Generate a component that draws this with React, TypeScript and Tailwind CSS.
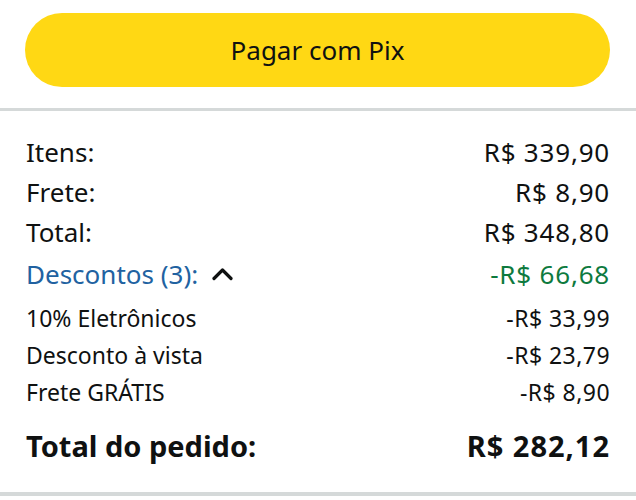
import React from "react";

function Row({ label, value, className, valueClass }: { label: React.ReactNode; value: string; className: string; valueClass?: string }) {
  return (
    <div className={`flex items-center justify-between ${className}`}>
      <div className="flex items-center">{label}</div>
      <div className={valueClass}>{value}</div>
    </div>
  );
}

export default function App() {
  return (
    <div className="w-[636px] h-[500px] bg-white text-[#0f1111] overflow-hidden" style={{ fontFamily: '"Noto Sans", "Open Sans", sans-serif' }}>
      <div className="px-[25px] pt-[13px] pb-[21px]">
        <button className="w-[585px] h-[74px] rounded-full bg-[#FFD814] text-[26px] text-[#0f1111] flex items-center justify-center">
          Pagar com Pix
        </button>
      </div>
      <div className="h-[3px] bg-[#d5d9d9]" />
      <div className="px-[26px] pt-[21px]">
        <Row label="Itens:" value="R$ 339,90" valueClass="tracking-[0.8px]" className="h-[40px] text-[26px]" />
        <Row label="Frete:" value="R$ 8,90" valueClass="tracking-[0.8px]" className="h-[40px] text-[26px]" />
        <Row label="Total:" value="R$ 348,80" valueClass="tracking-[0.8px]" className="h-[40px] text-[26px]" />
        <Row
          label={
            <>
              <span className="text-[#2162a1]">Descontos (3):</span>
              <svg className="ml-[14px]" width="21" height="14" viewBox="0 0 21 14" fill="none">
                <polyline points="2,11.5 10.5,3 19,11.5" stroke="#0f1111" strokeWidth="3.2" strokeLinecap="round" strokeLinejoin="round" />
              </svg>
            </>
          }
          value="-R$ 66,68"
          valueClass="text-[#0d7a3e] tracking-[0.8px]"
          className="h-[40px] mt-[2px] text-[26px]"
        />
        <div className="mt-[6px]">
          <Row label="10% Eletrônicos" value="-R$ 33,99" valueClass="tracking-[0.45px]" className="h-[37px] text-[23px]" />
          <Row label="Desconto à vista" value="-R$ 23,79" valueClass="tracking-[0.45px]" className="h-[37px] text-[23px]" />
          <Row label="Frete GRÁTIS" value="-R$ 8,90" valueClass="tracking-[0.45px]" className="h-[37px] text-[23px]" />
        </div>
        <Row label="Total do pedido:" value="R$ 282,12" valueClass="tracking-[1px]" className="h-[40px] mt-[15px] text-[29px] font-bold" />
      </div>
      <div className="mt-[26px] h-[4px] bg-[#d5d9d9]" />
    </div>
  );
}
